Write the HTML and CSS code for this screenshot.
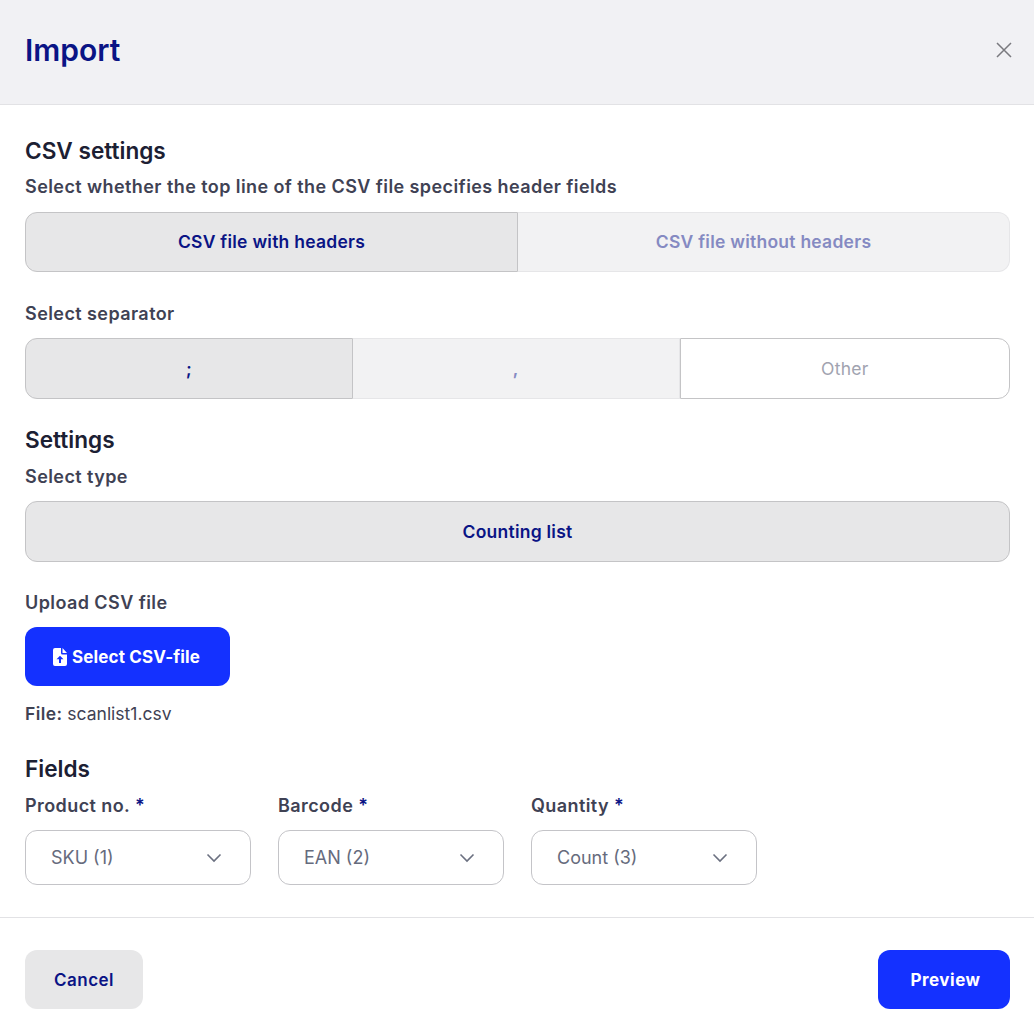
FILE: index.html
```html
<!DOCTYPE html>
<html lang="en">
<head>
<meta charset="utf-8">
<title>Import</title>
<link rel="stylesheet" href="styles.css">
</head>
<body>
<div class="modal">
  <header class="modal-header">
    <h1 class="modal-title">Import</h1>
    <button class="close" aria-label="Close">
      <svg width="16" height="16" viewBox="0 0 16 16" fill="none" stroke="#7a7a7f" stroke-width="1.5"><path d="M1 1l14 14M15 1L1 15"/></svg>
    </button>
  </header>
  <main class="modal-body">
    <h2 class="section-title">CSV settings</h2>
    <div class="label label-first">Select whether the top line of the CSV file specifies header fields</div>
    <div class="segments segments-first">
      <button class="seg active">CSV file with headers</button>
      <button class="seg muted">CSV file without headers</button>
    </div>
    <div class="label label-separator">Select separator</div>
    <div class="segments segments-separator">
      <button class="seg active">;</button>
      <button class="seg muted">,</button>
      <button class="seg other">Other</button>
    </div>
    <h2 class="section-title title-settings">Settings</h2>
    <div class="label label-type">Select type</div>
    <div class="segments segments-type">
      <button class="seg active">Counting list</button>
    </div>
    <div class="label label-spaced">Upload CSV file</div>
    <button class="primary upload">
      <svg width="14" height="18" viewBox="0 0 14 18"><path fill="#fff" fill-rule="evenodd" d="M2 0h6v5a1.5 1.5 0 0 0 1.500 1.500H14V16a2 2 0 0 1-2 2H2a2 2 0 0 1-2-2V2a2 2 0 0 1 2-2zM9.500 0L14 5H9.500zM7 7.800L3.500 11.300h2.500v3.700h2v-3.700h2.500z"/></svg>
      Select CSV-file
    </button>
    <p class="file"><b>File:</b> scanlist1.csv</p>
    <h2 class="section-title title-fields">Fields</h2>
    <div class="fields">
      <div class="field">
        <div class="label">Product no. <span class="req">*</span></div>
        <div class="select">SKU (1)<svg width="16" height="10" viewBox="0 0 16 10" fill="none" stroke="#6b7080" stroke-width="1.600"><path d="M1.500 1.500L8 8l6.500-6.500"/></svg></div>
      </div>
      <div class="field">
        <div class="label">Barcode <span class="req">*</span></div>
        <div class="select">EAN (2)<svg width="16" height="10" viewBox="0 0 16 10" fill="none" stroke="#6b7080" stroke-width="1.600"><path d="M1.500 1.500L8 8l6.500-6.500"/></svg></div>
      </div>
      <div class="field">
        <div class="label">Quantity <span class="req">*</span></div>
        <div class="select">Count (3)<svg width="16" height="10" viewBox="0 0 16 10" fill="none" stroke="#6b7080" stroke-width="1.600"><path d="M1.500 1.500L8 8l6.500-6.500"/></svg></div>
      </div>
    </div>
  </main>
  <footer class="modal-footer">
    <button class="secondary">Cancel</button>
    <button class="primary preview">Preview</button>
  </footer>
</div>
</body>
</html>
```
FILE: styles.css
```css
* { box-sizing: border-box; }
html, body { margin: 0; padding: 0; background: #fff; }
body { font-family: "Inter", "Liberation Sans", sans-serif; color: #3f4254; }
button { font-family: inherit; cursor: pointer; }
.modal { width: 1034px; height: 1036px; display: flex; flex-direction: column; }
.modal-header {
  height: 105px; flex: none; display: flex; align-items: center; justify-content: space-between;
  padding: 0 22px 5px 25px; background: #f1f1f4; border-bottom: 1px solid #e2e2e5;
}
.modal-title { margin: 0; font-size: 30px; line-height: 36px; font-weight: 600; color: #0a1485; }
.close { border: 0; background: none; padding: 0; width: 16px; height: 16px; display: flex; }
.modal-body { padding: 32px 24px 32px 25px; border-bottom: 1px solid #e2e2e5; height: 813px; flex: none; }
.section-title { margin: 0; font-size: 22.600px; line-height: 28px; font-weight: 600; color: #1c2033; }
.label { font-size: 18px; line-height: 24px; font-weight: 600; letter-spacing: 0.42px; color: #3f4254; }
.section-title + .label-first { margin-top: 10px; }
.section-title + .label-type { margin-top: 11px; }
.label-spaced { margin-top: 29px; }
.label-separator { margin-top: 30px; }
.segments { display: flex; margin-top: 13px; height: 61px; }
.segments-first { margin-top: 13px; height: 60px; }
.segments-separator { margin-top: 12px; }
.segments-type { margin-top: 12px; }
.seg {
  flex: 1 1 0; min-width: 0; margin: 0; padding-bottom: 2px; font-size: 17.500px; font-weight: 600; letter-spacing: 0.25px; border: 1px solid #c4c4c6; border-left-width: 0;
  background: #e7e7e8; color: #0a1485;
}
.seg:first-child { border-left-width: 1px; border-radius: 12px 0 0 12px; }
.seg:last-child { border-radius: 0 12px 12px 0; }
.seg:only-child { border-radius: 12px; }
.seg.muted { background: #f2f2f3; color: #858ac2; border-color: #e6e6e8; }
.seg.other { flex-grow: 1.008; background: #fff; color: #a1a3b0; font-weight: 400; border-left-width: 1px; }
.title-settings { margin-top: 27px; }
.primary { border: 0; border-radius: 12px; background: #1431ff; color: #fff; font-size: 17px; font-weight: 700; }
.upload { display: flex; align-items: center; gap: 5px; height: 59px; margin-top: 12px; padding: 0 28px; width: 205px; letter-spacing: 0.15px; }
.file { margin: 17px 0 0; font-size: 17.500px; line-height: 22px; color: #3f4254; }
.file b { font-weight: 600; letter-spacing: 0.4px; }
.title-fields { margin-top: 30px; }
.fields { display: flex; gap: 27.500px; margin-top: 11px; }
.field { width: 225.500px; }
.req { color: #0a1485; }
.select {
  display: flex; align-items: center; justify-content: space-between; height: 55px; margin-top: 12px; padding: 0 28px 0 25px;
  border: 1px solid #c4c4c8; border-radius: 12px; font-size: 18px; color: #666b7d;
}
.modal-footer { display: flex; justify-content: space-between; padding: 32px 24px 0 25px; }
.secondary { width: 118px; height: 59px; border: 0; border-radius: 12px; background: #e7e7e8; color: #0a1485; font-size: 17px; font-weight: 600; letter-spacing: 0.5px; }
.preview { width: 132px; height: 59px; padding-left: 9px; letter-spacing: 0.5px; }
```
